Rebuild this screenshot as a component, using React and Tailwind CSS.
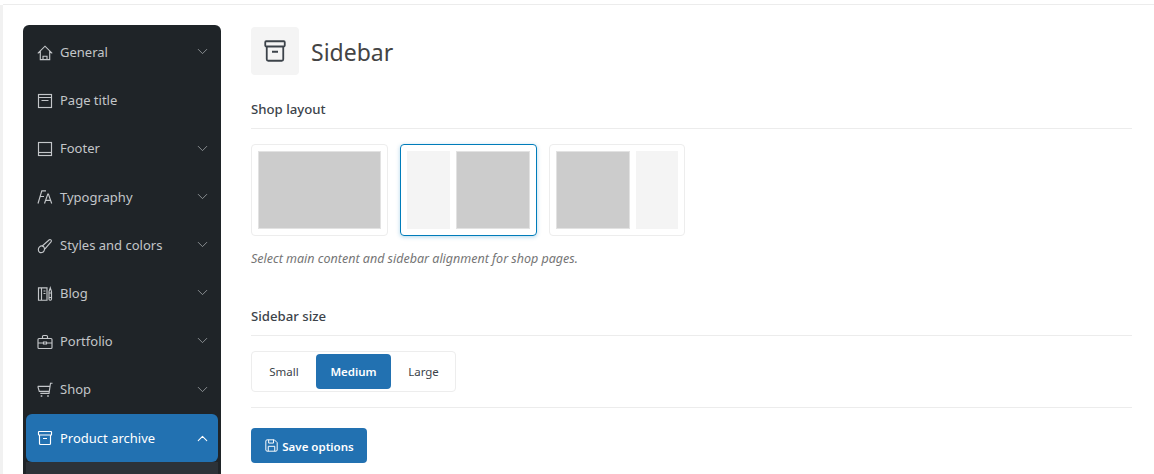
import React from "react";
import { ChevronDown, ChevronUp } from "lucide-react";

const Ic = ({ children }) => (
  <svg viewBox="0 0 16 16" fill="none" stroke="currentColor" strokeWidth="1.15" className="w-4 h-4 shrink-0">
    {children}
  </svg>
);

const HomeIcon = () => (
  <Ic>
    <path d="M.8 8.300 8 1.200l7.200 7.100M3.300 6v8.600h9.400V6M6 14.600v-3.400h4v3.400" />
  </Ic>
);
const PageIcon = () => (
  <Ic>
    <rect x="1.500" y="1.500" width="13" height="13" />
    <path d="M1.500 4.500h13M4.500 7.500h7" />
  </Ic>
);
const FooterIcon = () => (
  <Ic>
    <rect x="1.500" y="1.500" width="13" height="13" />
    <path d="M1.500 11.500h13" />
  </Ic>
);
const TypeIcon = () => (
  <Ic>
    <path d="M1 14.500 4.800 1.800H9M2.600 7.500h4.400M7.500 14.500l3.300-9.500h.6l3.300 9.500M8.700 11.300h4.900" />
  </Ic>
);
const BrushIcon = () => (
  <Ic>
    <path d="M2.300 9.200C1 10.500 1 13.200 2.500 14.200c1.500 1 3.700.300 4.500-1.200 1-1.700.600-3.200-.200-4.200-1.200-1-3.300-.800-4.500.400z" />
    <path d="M5 8.200 12.300 1.800c1-.800 2.700.500 1.900 1.800L8 10.800" />
  </Ic>
);
const BlogIcon = () => (
  <Ic>
    <path d="M1.500 1.800h8.500v12.400H1.500zM4.500 1.800v12.400M6.500 5h2M6.500 7.500h2" />
    <path d="M12 5.500v7.500c0 .600.400 1.200 1 1.200h.500c.600 0 1-.600 1-1.200V5.500L13.300 1.800zM12 7h2.500M12 11.500h2.500" />
  </Ic>
);
const CaseIcon = () => (
  <Ic>
    <rect x="1" y="4.500" width="14" height="10" rx="1" />
    <path d="M5.500 4.500V2.500c0-.600.400-1 1-1h3c.600 0 1 .400 1 1v2M1 9h5.500M9.500 9H15M6.500 8h3v2h-3z" />
  </Ic>
);
const CartIcon = () => (
  <Ic>
    <path d="M15.500 1.200h-2L12 11.300H3.300M.8 4.300h12.200M.8 4.300 2.300 9.300H12.300" />
    <path d="M4.500 13.300v1.400M11 13.300v1.400" strokeWidth="1.600" />
  </Ic>
);
const ArchiveIcon = ({ className = "w-4 h-4", width = 1.15 }) => (
  <svg viewBox="0 0 16 16" fill="none" stroke="currentColor" strokeWidth={width} className={`${className} shrink-0`}>
    <rect x="1.500" y="1.500" width="13" height="3.500" rx=".6" />
    <path d="M2.500 5v8.500c0 .600.400 1 1 1h9c.600 0 1-.400 1-1V5M6 8.500h4" />
  </svg>
);
const SaveIcon = () => (
  <svg viewBox="0 0 16 16" fill="none" stroke="currentColor" strokeWidth="1.200" className="w-[13px] h-[13px] shrink-0">
    <path d="M1 2.500c0-.800.700-1.500 1.500-1.500h9L15 4.500v9c0 .800-.700 1.500-1.500 1.500h-11c-.800 0-1.500-.700-1.500-1.500z" />
    <path d="M4.500 1v4h6V1M4 15v-6h8v6" />
  </svg>
);

const menu = [
  { label: "General", icon: HomeIcon, arrow: true },
  { label: "Page title", icon: PageIcon },
  { label: "Footer", icon: FooterIcon, arrow: true },
  { label: "Typography", icon: TypeIcon, arrow: true },
  { label: "Styles and colors", icon: BrushIcon, arrow: true },
  { label: "Blog", icon: BlogIcon, arrow: true },
  { label: "Portfolio", icon: CaseIcon, arrow: true },
  { label: "Shop", icon: CartIcon, arrow: true },
];

function Sidebar() {
  return (
    <aside className="w-[198px] shrink-0 mt-[20px] bg-[#1f2428] rounded-t-md px-[3px] pt-[3.7px]">
      {menu.map((item) => (
        <div key={item.label} className="h-[48.2px] flex items-center pl-[11px] pr-[7.5px] text-[13px] text-[#c3c6c9]">
          <item.icon />
          <span className="ml-[7px] flex-1">{item.label}</span>
          {item.arrow && <ChevronDown strokeWidth={1.2} className="w-[17px] h-[17px] -translate-y-[1px] text-[#9a9ea2]" />}
        </div>
      ))}
      <div className="h-[48px] flex items-center pl-[11px] pr-[7.5px] text-[13px] text-white bg-[#2271b1] rounded-md">
        <ArchiveIcon />
        <span className="ml-[7px] flex-1 translate-y-[1px]">Product archive</span>
        <ChevronUp strokeWidth={1.5} className="w-[17px] h-[17px]" />
      </div>
      <div className="h-[20px] bg-[#2c3238]" />
    </aside>
  );
}

function LayoutCard({ active, wide = true, children }) {
  return (
    <div
      className={`${wide ? "w-[137px]" : "w-[136px]"} h-[92px] p-[6px] flex gap-[6px] rounded border ${
        active ? "border-[#007cba] shadow-[0_1px_4px_rgba(0,124,186,0.3)]" : "border-[#ededed]"
      }`}
    >
      {children}
    </div>
  );
}

export default function App() {
  return (
    <div className="h-[474px] w-[1154px] overflow-hidden bg-white font-['Noto_Sans','Open_Sans',sans-serif] text-[#3c434a]">
      <div className="h-[5px] ml-[3px] bg-white border-b border-[#ececec]" />
      <div className="flex h-[469px] border-l-[3px] border-[#f1f1f1] pl-[20px] pr-[22px]">
        <Sidebar />
        <main className="flex-1 ml-[30px] pt-[22px]">
          <div className="flex items-center gap-3">
            <div className="w-12 h-12 rounded bg-[#f4f4f4] flex items-center justify-center">
              <ArchiveIcon className="w-[24px] h-[24px]" width={1.2} />
            </div>
            <h1 className="text-[23px] leading-none font-normal text-[#444] translate-y-[1px]">Sidebar</h1>
          </div>

          <h2 className="mt-[24px] text-[13.2px] leading-5 font-medium pb-[9px] border-b border-[#ececec]">Shop layout</h2>
          <div className="flex gap-[12px] mt-[15px]">
            <LayoutCard>
              <div className="flex-1 bg-[#cccccc] border border-[#e2e2e2]" />
            </LayoutCard>
            <LayoutCard active>
              <div className="w-[43px] bg-[#f4f4f4]" />
              <div className="flex-1 bg-[#cccccc] border border-[#e2e2e2]" />
            </LayoutCard>
            <LayoutCard wide={false}>
              <div className="flex-1 bg-[#cccccc] border border-[#e2e2e2]" />
              <div className="w-[42px] bg-[#f4f4f4]" />
            </LayoutCard>
          </div>
          <p className="mt-[14px] text-[12.500px] leading-[18px] italic text-[#757575]">
            Select main content and sidebar alignment for shop pages.
          </p>

          <h2 className="mt-[38px] text-[13.2px] leading-5 font-medium pb-[9px] border-b border-[#ececec]">Sidebar size</h2>
          <div className="mt-[15px] inline-flex h-[41px] w-[205px] p-[2px] rounded border border-[#ededed] text-[11.5px]">
            <span className="w-[60px] flex items-center justify-center">Small</span>
            <span className="w-[75px] ml-[2px] flex items-center justify-center rounded bg-[#2271b1] text-white font-semibold">Medium</span>
            <span className="flex-1 pl-[3px] flex items-center justify-center">Large</span>
          </div>
          <div className="mt-[15px] border-b border-[#ececec]" />
          <button className="mt-[20px] w-[116px] h-[35px] pl-[1px] flex items-center justify-center gap-[4px] rounded bg-[#2271b1] text-white text-[11.5px] font-semibold">
            <SaveIcon />
            <span className="translate-y-[1px]">Save options</span>
          </button>
        </main>
      </div>
    </div>
  );
}
